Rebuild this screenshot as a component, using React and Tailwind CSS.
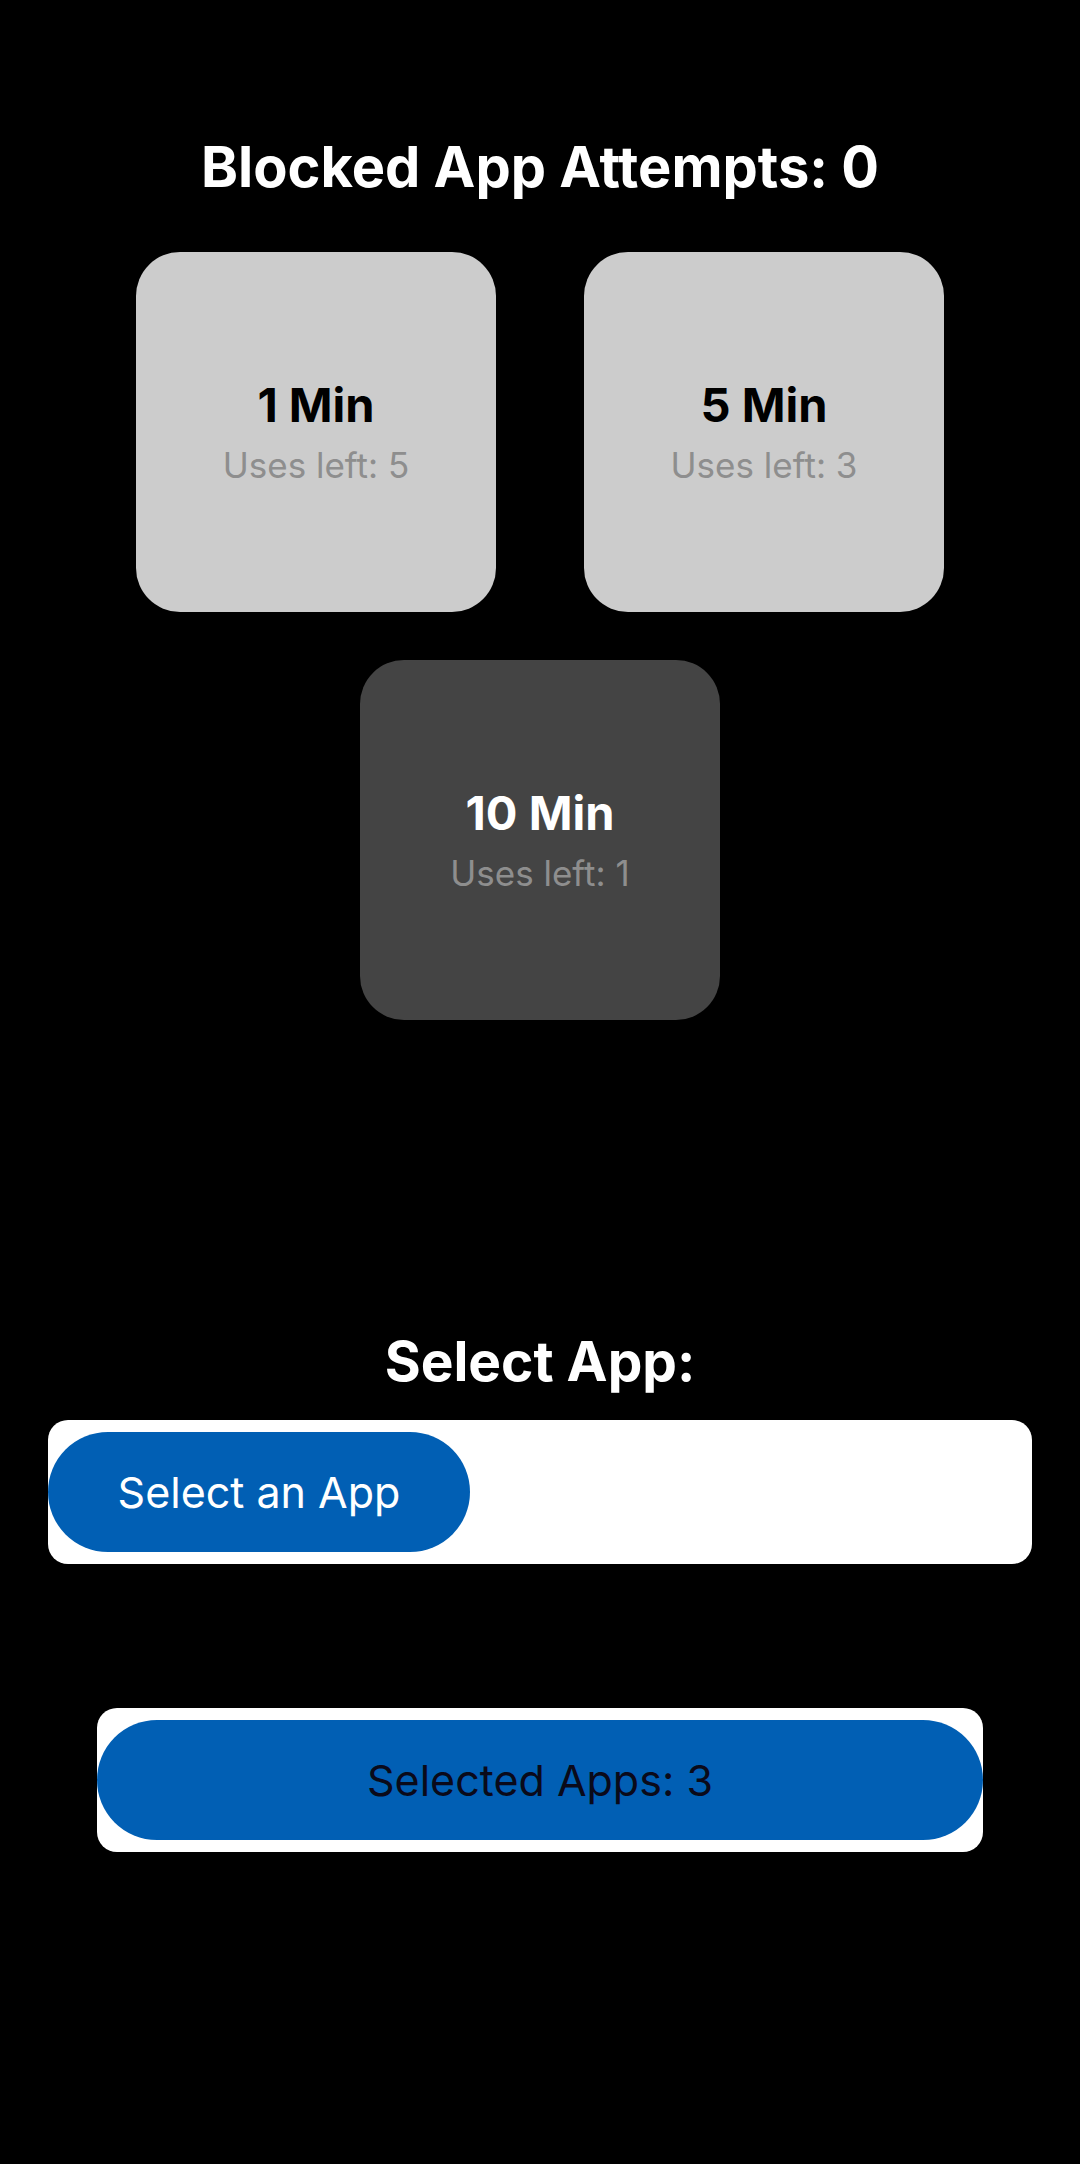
export default function App() {
  const timers = [
    { label: '1 Min', uses: 5, active: false },
    { label: '5 Min', uses: 3, active: false },
    { label: '10 Min', uses: 1, active: true },
  ];

  const Card = ({ t }) => (
    <div
      className={
        'w-[360px] h-[360px] rounded-[44px] flex flex-col items-center justify-center ' +
        (t.active ? 'bg-[#444444]' : 'bg-[#cccccc]')
      }
    >
      <div className={'text-[47px] font-bold leading-none ' + (t.active ? 'text-white' : 'text-black')}>
        {t.label}
      </div>
      <div className="text-[35px] leading-none mt-[20px] text-[#8e8e8e]">Uses left: {t.uses}</div>
    </div>
  );

  return (
    <div className="w-[1080px] h-[2164px] bg-black flex flex-col items-center font-['Inter',sans-serif]">
      <h1 className="mt-[139px] text-[56px] font-bold leading-none text-white">
        Blocked App Attempts: 0
      </h1>
      <div className="mt-[57px] flex gap-[88px]">
        <Card t={timers[0]} />
        <Card t={timers[1]} />
      </div>
      <div className="mt-[48px]">
        <Card t={timers[2]} />
      </div>
      <h2 className="mt-[314px] text-[55px] font-bold leading-none text-white">Select App:</h2>
      <div className="mt-[31px] w-[984px] h-[144px] bg-white rounded-[20px] flex items-center">
        <button className="h-[120px] w-[422px] rounded-full bg-[#015fb4] text-white text-[43px] leading-none">
          Select an App
        </button>
      </div>
      <div className="mt-[144px] w-[886px] h-[144px] bg-white rounded-[20px] flex items-center">
        <button className="h-[120px] w-full rounded-full bg-[#015fb4] text-[#0a0a1a] text-[43px] leading-none">
          Selected Apps: 3
        </button>
      </div>
    </div>
  );
}
